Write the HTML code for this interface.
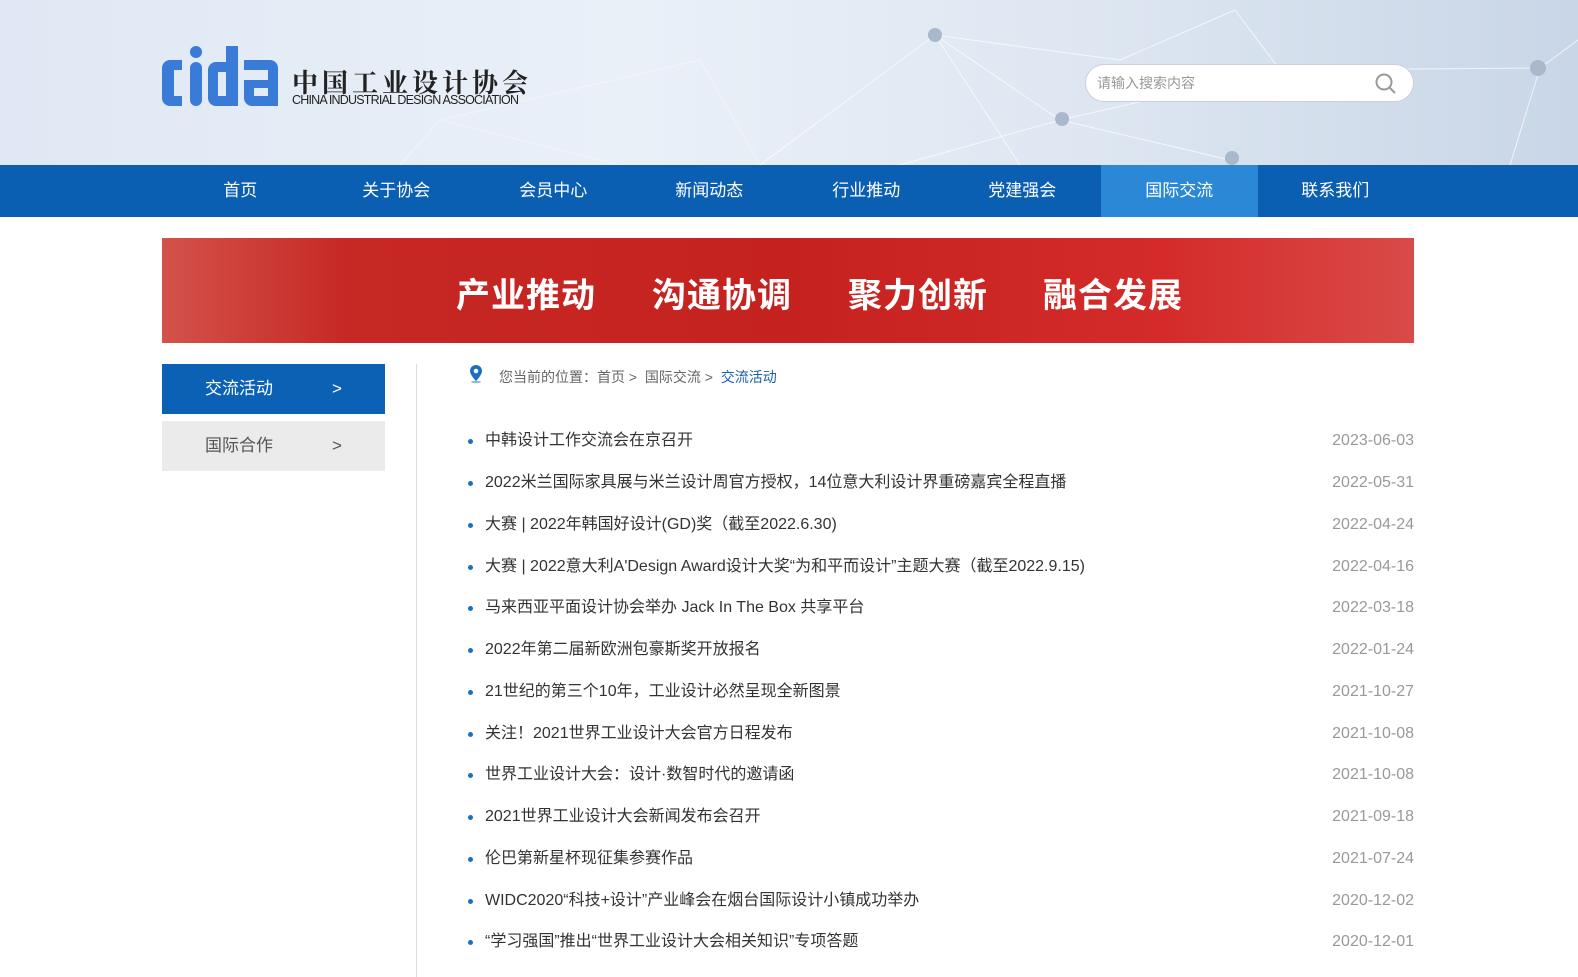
<!DOCTYPE html>
<html><head><meta charset="utf-8"><style>
*{margin:0;padding:0;box-sizing:border-box}
body{width:1578px;height:977px;overflow:hidden;background:#fff;font-family:"Liberation Sans","Noto Sans CJK SC",sans-serif;position:relative}
.hdr{position:absolute;left:0;top:0;width:1578px;height:165px;background:linear-gradient(90deg,#dfe8f4 0%,#eaf0f8 40%,#dde6f1 70%,#c9d6e7 100%)}
.nav{position:absolute;left:0;top:165px;width:1578px;height:52px;background:#0b5fb2}
.nav div{position:absolute;top:0;width:156.5px;height:52px;line-height:52px;text-align:center;color:#fff;font-size:17px}
.ban{position:absolute;left:162px;top:238px;width:1252px;height:105px;background:linear-gradient(90deg,#d3524a 0%,#c62824 15%,#c5221f 50%,#d42b2a 80%,#d94a48 100%)}
.ban span{position:absolute;top:30px;color:#fff;font-size:34px;font-weight:bold;letter-spacing:1px}
.side{position:absolute;left:162px;width:223px;height:50px;line-height:50px;padding-left:43px;font-size:17px}
.side i{position:absolute;left:170px;font-style:normal}
.row{position:absolute;left:470px;width:944px;font-size:16px;color:#333;height:24px;line-height:24px}
.row b{position:absolute;left:-2px;top:10px;width:5px;height:5px;border-radius:50%;background:#1a6fc2}
.row .t{position:absolute;left:15px}
.row .d{position:absolute;right:0;color:#999}
</style></head><body>
<div class="hdr">
<svg width="1578" height="165" style="position:absolute;left:0;top:0" stroke="#fff" stroke-opacity=".7" fill="none">
<path d="M760 165L935 35L1060 120L1230 160M935 35L1120 60L1235 10M1060 120L1280 70L1540 68L1578 40M1280 70L1235 10M1540 68L1510 165M1060 120L900 165M935 35L1020 165"/>
<path d="M400 165L440 120L700 60L760 165M440 120L620 165" stroke-opacity=".4"/>
<g fill="#aab8cc" stroke="none"><circle cx="935" cy="35" r="7"/><circle cx="1062" cy="119" r="7"/><circle cx="1232" cy="158" r="7"/><circle cx="1538" cy="68" r="8"/></g>
</svg>
<svg width="116" height="62" style="position:absolute;left:162px;top:46px" fill="#3a7bd8">
<path d="M0 22a8 8 0 0 1 8-8h12v10h-8v26h8v10H8a8 8 0 0 1-8-8z"/>
<circle cx="34" cy="6" r="6"/><rect x="28" y="16" width="12" height="44" rx="6"/>
<path d="M46 24a8 8 0 0 1 8-8h10V0h12v60H54a8 8 0 0 1-8-8zM56 26v24h8V26z" fill-rule="evenodd"/>
<path d="M82 14h26a8 8 0 0 1 8 8v38H90a8 8 0 0 1-8-8V34h24v-10H82zM92 42v8h14v-8z" fill-rule="evenodd"/>
</svg>
<div style="position:absolute;left:292px;top:63px;font-size:26px;font-weight:bold;color:#222;letter-spacing:4px;font-family:'Noto Serif CJK SC',serif">中国工业设计协会</div>
<div style="position:absolute;left:292px;top:93px;font-size:12.5px;color:#222;letter-spacing:-.8px">CHINA INDUSTRIAL DESIGN ASSOCIATION</div>
<div style="position:absolute;left:1085px;top:64px;width:329px;height:38px;border:1px solid #ccd;border-radius:19px;background:#fff;font-size:14px;color:#999;line-height:36px;padding-left:11px">请输入搜索内容
<svg width="22" height="22" style="position:absolute;right:16px;top:8px" fill="none" stroke="#999" stroke-width="2"><circle cx="9" cy="9" r="7.5"/><path d="M14.5 14.5L20 20"/></svg></div>
</div>
<div class="nav">
<div style="left:162px">首页</div><div style="left:318px">关于协会</div><div style="left:475px">会员中心</div><div style="left:631px">新闻动态</div><div style="left:788px">行业推动</div><div style="left:944px">党建强会</div><div style="left:1101px;background:#2a88d6">国际交流</div><div style="left:1257px">联系我们</div>
</div>
<div class="ban"><span style="left:294px">产业推动</span><span style="left:490px">沟通协调</span><span style="left:686px">聚力创新</span><span style="left:881px">融合发展</span></div>
<div class="side" style="top:364px;background:#0b62b4;color:#fff">交流活动<i>&gt;</i></div>
<div class="side" style="top:421px;background:#ebebeb;color:#555">国际合作<i>&gt;</i></div>
<div style="position:absolute;left:416px;top:364px;width:1px;height:613px;background:#ddd"></div>
<svg width="16" height="20" style="position:absolute;left:468px;top:364px"><path d="M8 1a6 6 0 0 0-6 6c0 4 6 10 6 10s6-6 6-10a6 6 0 0 0-6-6z" fill="#1a6fc2"/><circle cx="8" cy="7" r="2.3" fill="#fff"/><ellipse cx="8" cy="18" rx="5" ry="1.3" fill="#1a6fc2" opacity=".5"/></svg>
<div style="position:absolute;left:499px;top:367px;font-size:14px;color:#666">您当前的位置：首页 &gt;&nbsp; 国际交流 &gt;&nbsp; <span style="color:#1a5fa8">交流活动</span></div>
<div class="row" style="top:429px"><b></b><span class="t">中韩设计工作交流会在京召开</span><span class="d">2023-06-03</span></div>
<div class="row" style="top:471px"><b></b><span class="t">2022米兰国际家具展与米兰设计周官方授权，14位意大利设计界重磅嘉宾全程直播</span><span class="d">2022-05-31</span></div>
<div class="row" style="top:513px"><b></b><span class="t">大赛 | 2022年韩国好设计(GD)奖（截至2022.6.30)</span><span class="d">2022-04-24</span></div>
<div class="row" style="top:555px"><b></b><span class="t">大赛 | 2022意大利A'Design Award设计大奖“为和平而设计”主题大赛（截至2022.9.15)</span><span class="d">2022-04-16</span></div>
<div class="row" style="top:596px"><b></b><span class="t">马来西亚平面设计协会举办 Jack In The Box 共享平台</span><span class="d">2022-03-18</span></div>
<div class="row" style="top:638px"><b></b><span class="t">2022年第二届新欧洲包豪斯奖开放报名</span><span class="d">2022-01-24</span></div>
<div class="row" style="top:680px"><b></b><span class="t">21世纪的第三个10年，工业设计必然呈现全新图景</span><span class="d">2021-10-27</span></div>
<div class="row" style="top:722px"><b></b><span class="t">关注！2021世界工业设计大会官方日程发布</span><span class="d">2021-10-08</span></div>
<div class="row" style="top:763px"><b></b><span class="t">世界工业设计大会：设计·数智时代的邀请函</span><span class="d">2021-10-08</span></div>
<div class="row" style="top:805px"><b></b><span class="t">2021世界工业设计大会新闻发布会召开</span><span class="d">2021-09-18</span></div>
<div class="row" style="top:847px"><b></b><span class="t">伦巴第新星杯现征集参赛作品</span><span class="d">2021-07-24</span></div>
<div class="row" style="top:889px"><b></b><span class="t">WIDC2020“科技+设计”产业峰会在烟台国际设计小镇成功举办</span><span class="d">2020-12-02</span></div>
<div class="row" style="top:930px"><b></b><span class="t">“学习强国”推出“世界工业设计大会相关知识”专项答题</span><span class="d">2020-12-01</span></div>
</body></html>
